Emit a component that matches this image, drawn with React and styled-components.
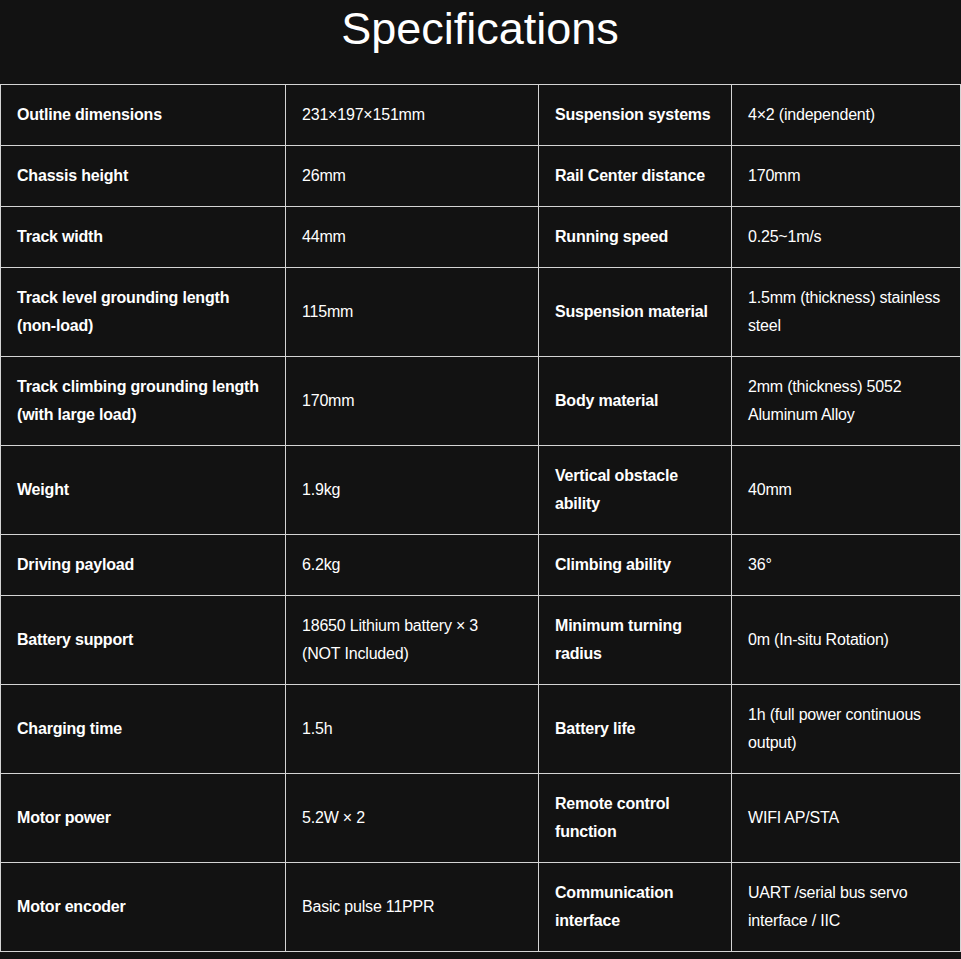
import React from 'react'
import styled, { createGlobalStyle } from 'styled-components'

const BG = '#121212'
const LINE = '#d4d4d4'

const GlobalStyle = createGlobalStyle`
  body {
    margin: 0;
    background: ${BG};
    color: #ffffff;
    font-family: "Liberation Sans", Arial, sans-serif;
  }
`

const Page = styled.div`
  width: 960px;
  background: ${BG};
`

const Title = styled.h1`
  margin: 0;
  padding: 3px 0 30px;
  font-size: 45px;
  line-height: 51px;
  font-weight: 400;
  text-align: center;
`

const Table = styled.table`
  width: 960px;
  border-collapse: collapse;
  table-layout: fixed;
`

const Col = styled.col`
  width: ${(p) => p.$w}px;
`

const Cell = styled.td`
  border: 1px solid ${LINE};
  padding: 16px;
  font-size: 16px;
  line-height: 28px;
  letter-spacing: -0.2px;
  vertical-align: middle;
  font-weight: ${(p) => (p.$label ? 700 : 400)};
`

const specs = [
  ['Outline dimensions', '231×197×151mm', 'Suspension systems', '4×2 (independent)'],
  ['Chassis height', '26mm', 'Rail Center distance', '170mm'],
  ['Track width', '44mm', 'Running speed', '0.25~1m/s'],
  ['Track level grounding length (non-load)', '115mm', 'Suspension material', '1.5mm (thickness) stainless steel'],
  ['Track climbing grounding length (with large load)', '170mm', 'Body material', '2mm (thickness) 5052 Aluminum Alloy'],
  ['Weight', '1.9kg', 'Vertical obstacle ability', '40mm'],
  ['Driving payload', '6.2kg', 'Climbing ability', '36°'],
  ['Battery support', '18650 Lithium battery × 3 (NOT\u00A0Included)', 'Minimum turning radius', '0m (In-situ Rotation)'],
  ['Charging time', '1.5h', 'Battery life', '1h (full power continuous output)'],
  ['Motor power', '5.2W × 2', 'Remote control function', 'WIFI AP/STA'],
  ['Motor encoder', 'Basic pulse 11PPR', 'Communication interface', 'UART /serial bus servo interface / IIC'],
]

function App () {
  return (
    <Page>
      <GlobalStyle />
      <Title>Specifications</Title>
      <Table>
        <colgroup>
          <Col $w={285} />
          <Col $w={253} />
          <Col $w={193} />
          <Col $w={229} />
        </colgroup>
        <tbody>
          {specs.map((row) => (
            <tr key={row[0]}>
              <Cell $label>{row[0]}</Cell>
              <Cell>{row[1]}</Cell>
              <Cell $label>{row[2]}</Cell>
              <Cell>{row[3]}</Cell>
            </tr>
          ))}
        </tbody>
      </Table>
    </Page>
  )
}

export default App
